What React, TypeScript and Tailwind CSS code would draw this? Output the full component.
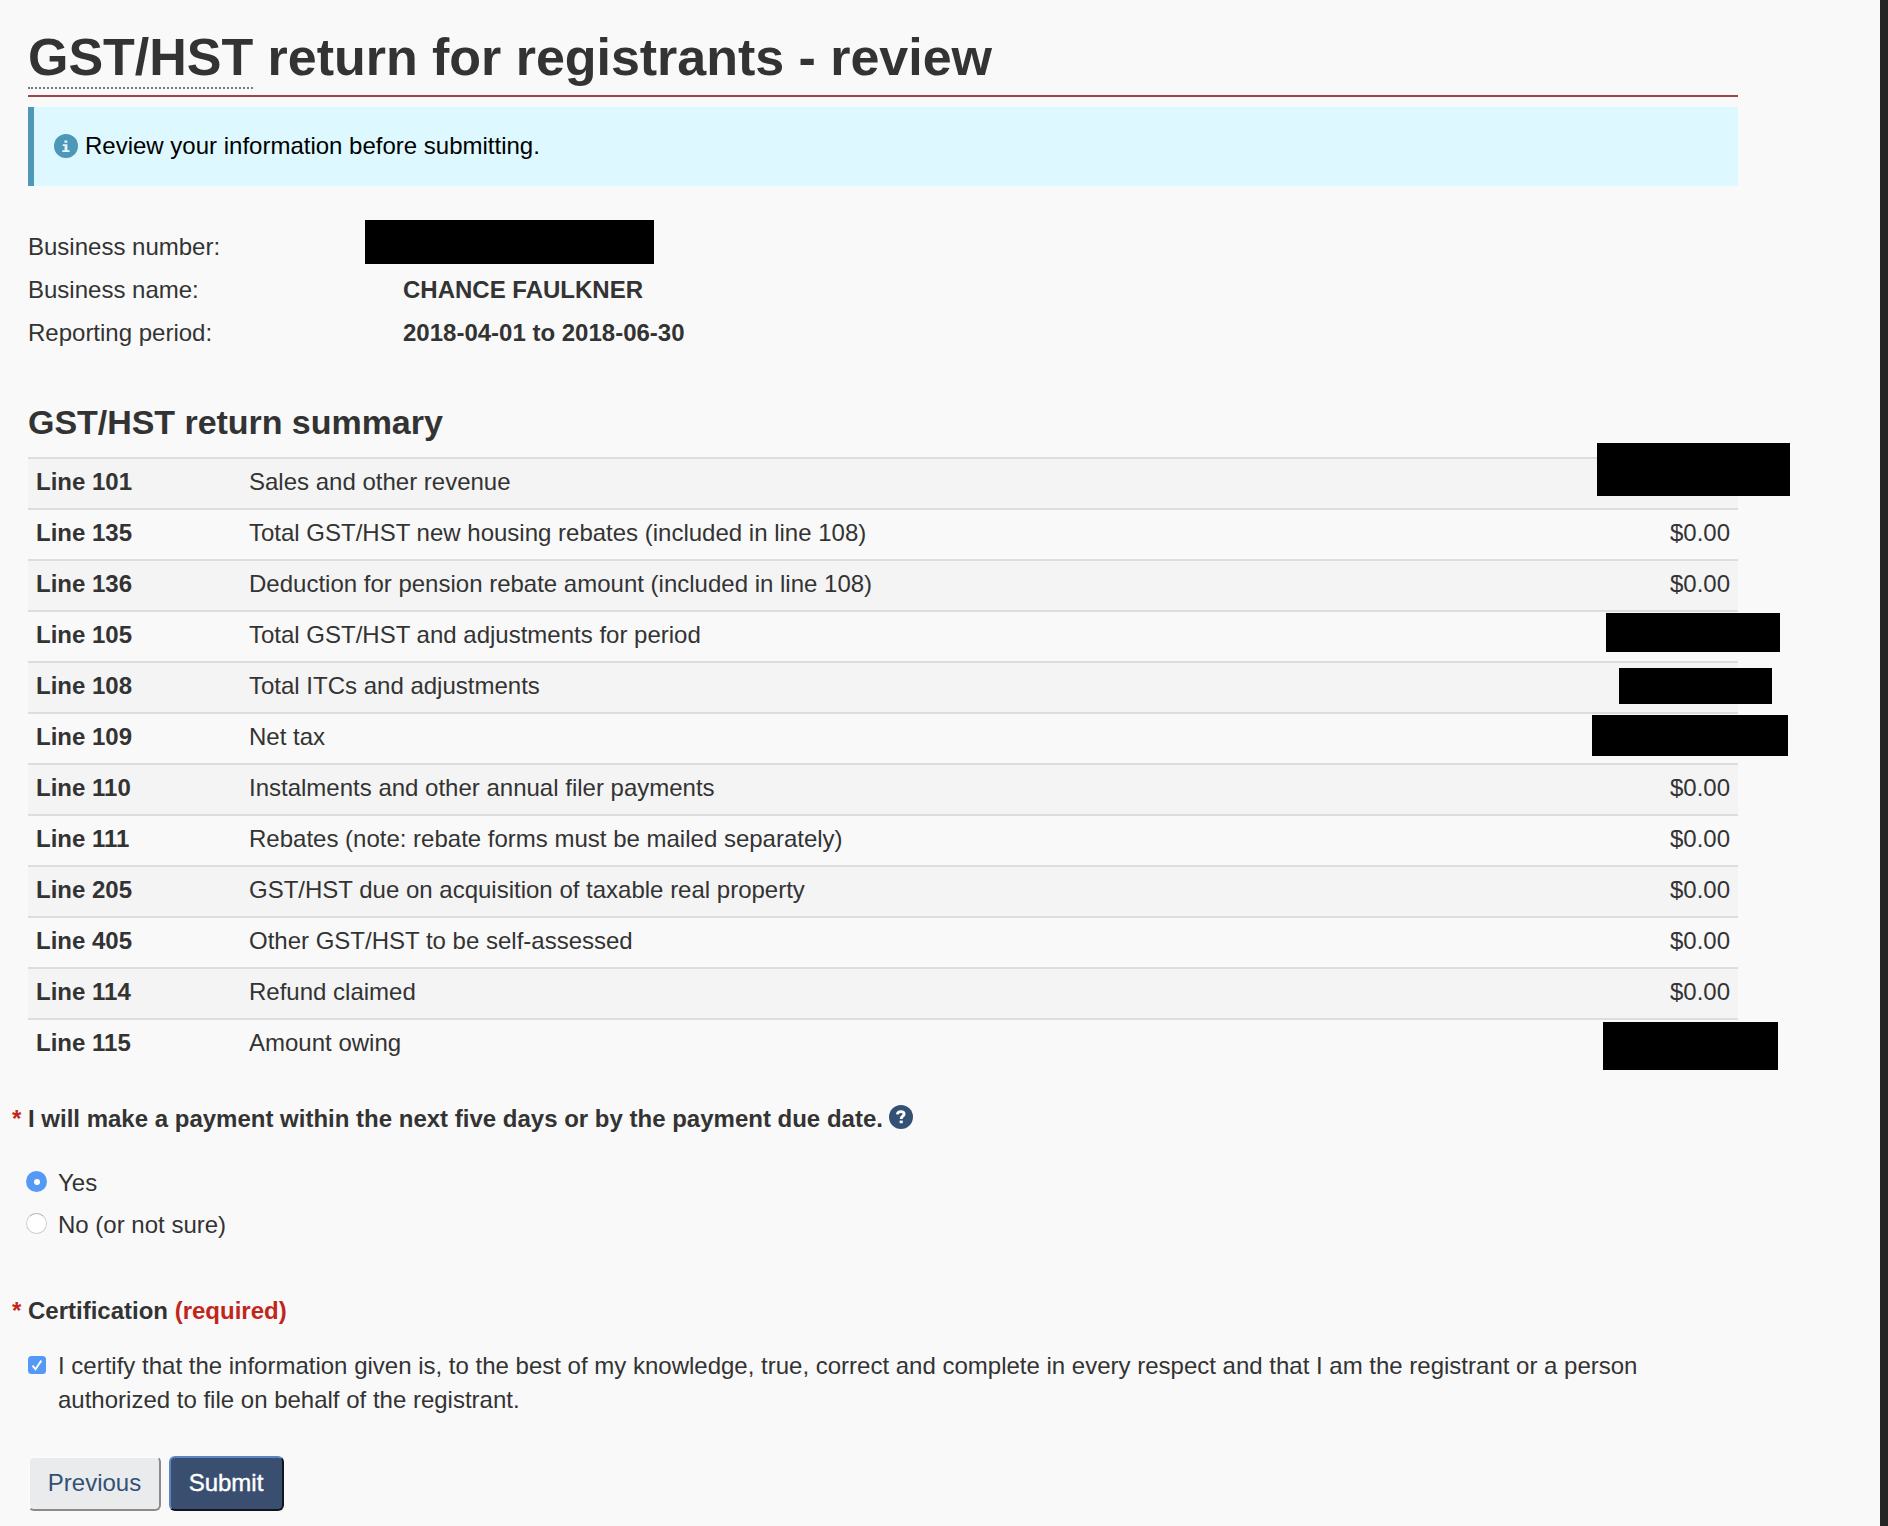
import { ReactNode } from "react";

type Line = {
  no: string;
  label: string;
  // Black bar drawn over a hidden amount, otherwise $0.00 is shown
  bar?: string;
};

const LINES: Line[] = [
  { no: "101", label: "Sales and other revenue", bar: "-top-[16px] left-[1569px] h-[53px] w-[193px]" },
  { no: "135", label: "Total GST/HST new housing rebates (included in line 108)" },
  { no: "136", label: "Deduction for pension rebate amount (included in line 108)" },
  { no: "105", label: "Total GST/HST and adjustments for period", bar: "top-[1px] left-[1578px] h-[39px] w-[174px]" },
  { no: "108", label: "Total ITCs and adjustments", bar: "top-[5px] left-[1591px] h-[36px] w-[153px]" },
  { no: "109", label: "Net tax", bar: "top-[1px] left-[1564px] h-[41px] w-[196px]" },
  { no: "110", label: "Instalments and other annual filer payments" },
  { no: "111", label: "Rebates (note: rebate forms must be mailed separately)" },
  { no: "205", label: "GST/HST due on acquisition of taxable real property" },
  { no: "405", label: "Other GST/HST to be self-assessed" },
  { no: "114", label: "Refund claimed" },
  { no: "115", label: "Amount owing", bar: "top-[2px] left-[1575px] h-[48px] w-[175px]" },
];

function InfoIcon() {
  return (
    <svg viewBox="0 0 24 24" className="size-6" aria-hidden>
      <circle cx="12" cy="12" r="12" fill="#4d97b8" />
      <path d="M10.4 6.6h2.9v2.2h-2.9zM8.7 10.3h4.7v6h2.2v1.7H8.3v-1.7h2.3v-4.4H8.7z" fill="#dff8fd" />
    </svg>
  );
}

function HelpIcon() {
  return (
    <svg viewBox="0 0 24 24" className="size-6" aria-hidden>
      <circle cx="12" cy="12" r="12" fill="#335075" />
      <path
        d="M8.4 9.3C8.6 7.4 9.9 6.6 11.9 6.6c2 0 3.2.9 3.2 2.4 0 2.3-2.9 2.2-2.9 5"
        fill="none"
        stroke="#fff"
        strokeWidth="2.9"
      />
      <path d="M10.6 15.6h3.2v2.6h-3.2z" fill="#fff" />
    </svg>
  );
}

function Field({ label, children }: { label: string; children?: ReactNode }) {
  return (
    <div className="relative flex h-[43px] pt-1">
      <dt className="w-[375px]">{label}</dt>
      <dd className="font-bold">{children}</dd>
    </div>
  );
}

function Radio({ checked }: { checked?: boolean }) {
  return checked ? (
    <span className="mt-[5px] -ml-[2px] flex size-[21px] items-center justify-center rounded-full bg-[#5599f7]">
      <span className="size-[6px] rounded-full bg-white" />
    </span>
  ) : (
    <span className="mt-[5px] -ml-[2px] block size-[21px] rounded-full border border-[#cfcfcf] border-t-[#b5b5b5] bg-white" />
  );
}

export default function App() {
  return (
    <div className="flex h-[1526px] w-[1888px] overflow-hidden bg-[#f9f9f9] font-['Liberation_Sans',Arial,sans-serif] text-[24px] leading-[34px] text-[#333]">
      <main className="ml-7 w-[1710px]">
        <h1 className="h-[97px] border-b-2 border-[#a04446] pt-[28px] text-[52px] leading-[58px] font-bold tracking-[-0.03px]">
          <abbr
            title="Goods and services tax / Harmonized sales tax"
            className="border-b-2 border-dotted border-[#777] pb-px no-underline"
          >
            GST/HST
          </abbr>{" "}
          return for registrants - review
        </h1>

        <section className="mt-[10px] flex h-[79px] border-l-[6px] border-[#4d97b8] bg-[#ddf8fe] pt-[22px] pl-5 text-black">
          <span className="mt-[5px] mr-[7px]">
            <InfoIcon />
          </span>
          <p>Review your information before submitting.</p>
        </section>

        <dl className="mt-10">
          <Field label="Business number:">
            <span className="absolute -top-[6px] left-[337px] h-[44px] w-[289px] bg-black" />
          </Field>
          <Field label="Business name:">CHANCE FAULKNER</Field>
          <Field label="Reporting period:">2018-04-01 to 2018-06-30</Field>
        </dl>

        <h2 className="mt-12 text-[34px] leading-[38px] font-bold tracking-[-0.04px]">GST/HST return summary</h2>
        <div className="mt-4">
          {LINES.map((line) => (
            <div
              key={line.no}
              className="relative flex h-[51px] border-t-2 border-[#ddd] px-2 pt-[6px] odd:bg-[#f4f4f4]"
            >
              <span className="w-[213px] font-bold">Line {line.no}</span>
              <span className="flex-1">{line.label}</span>
              {line.bar ? <span className={`absolute z-10 bg-black ${line.bar}`} /> : <span>$0.00</span>}
            </div>
          ))}
        </div>

        <fieldset className="mt-[33px]">
          <legend className="flex font-bold">
            <span className="-ml-4 w-4 text-[#c1261d]">*</span>
            I will make a payment within the next five days or by the payment due date.
            <span className="mt-[3px] ml-[6px]">
              <HelpIcon />
            </span>
          </legend>
          <label className="mt-[30px] flex h-[42px]">
            <span className="w-[30px]">
              <Radio checked />
            </span>
            Yes
          </label>
          <label className="flex h-[34px]">
            <span className="w-[30px]">
              <Radio />
            </span>
            No (or not sure)
          </label>
        </fieldset>

        <div className="mt-[52px] flex font-bold">
          <span className="-ml-4 w-4 text-[#c1261d]">*</span>
          <p>
            Certification <span className="text-[#c1261d]">(required)</span>
          </p>
        </div>
        <label className="mt-[21px] flex">
          <span className="w-[30px] shrink-0">
            <svg viewBox="0 0 18 18" className="mt-[7px] size-[18px]" aria-hidden>
              <rect width="18" height="18" rx="3.5" fill="#5599f7" />
              <path d="M4.5 9.6l3 3.6 5.8-8.6" fill="none" stroke="#fff" strokeWidth="1.9" />
            </svg>
          </span>
          <span className="w-[1640px]">
            I certify that the information given is, to the best of my knowledge, true, correct and complete in every
            respect and that I am the registrant or a person authorized to file on behalf of the registrant.
          </span>
        </label>

        <div className="mt-[39px] flex gap-2">
          <button className="h-[55px] w-[133px] rounded-[6px] border-2 border-t-[#fbfbfe] border-r-[#8a8a8a] border-b-[#8a8a8a] border-l-[#fbfbfe] bg-[#eaebed] pb-[2px] text-[#335075]">
            Previous
          </button>
          <button className="h-[55px] w-[115px] rounded-[6px] border-2 border-t-[#5b85c4] border-r-[#10151f] border-b-[#10151f] border-l-[#5b85c4] bg-[#3a4f70] pr-px pb-[2px] text-white [-webkit-text-stroke:0.4px_white]">
            Submit
          </button>
        </div>
      </main>
      <div className="ml-auto w-2 bg-[#262626]" />
    </div>
  );
}
